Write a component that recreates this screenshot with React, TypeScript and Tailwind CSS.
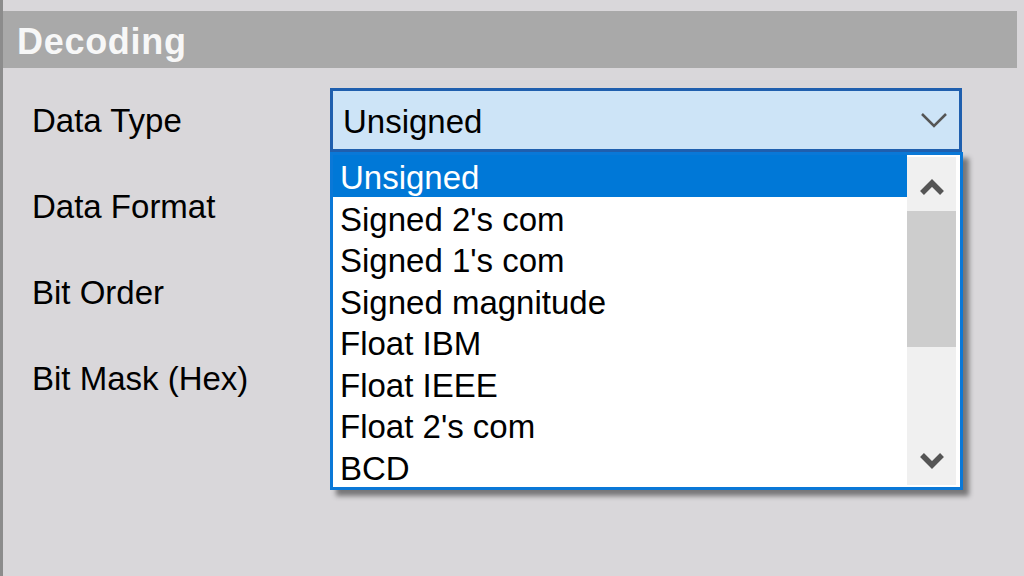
import React from "react";

const items = [
  "Unsigned",
  "Signed 2's com",
  "Signed 1's com",
  "Signed magnitude",
  "Float IBM",
  "Float IEEE",
  "Float 2's com",
  "BCD",
];

const labels = ["Data Type", "Data Format", "Bit Order", "Bit Mask (Hex)"];

export default function App() {
  return (
    <div
      className="w-[1024px] h-[576px] bg-[#d9d7da] border-l-[3px] border-[#8c8c8c] pt-[11px] pr-[7px] overflow-hidden"
      style={{ fontFamily: '"Liberation Sans", Arial, sans-serif' }}
    >
      <div className="h-[57px] bg-[#a9a9a9] flex items-center pl-[14px] pt-[4px]">
        <span className="text-[36px] font-bold text-[#f7f7f7] leading-none tracking-[0.7px]">
          Decoding
        </span>
      </div>
      <div className="flex mt-[20px]">
        <div className="w-[327px] pl-[29px] flex flex-col gap-[22px]">
          {labels.map((l) => (
            <div key={l} className="h-[64px] flex items-center text-[33px] text-black leading-none">
              {l}
            </div>
          ))}
        </div>
        <div className="relative w-[632px]">
          <div className="h-[64px] border-[3px] border-[#1f5fae] bg-[#cde4f7] flex items-center justify-between pl-[10px] pr-[11px]">
            <span className="text-[33px] text-black leading-none pt-[2px]">Unsigned</span>
            <svg width="28" height="18" viewBox="0 0 28 18">
              <polyline points="2,3 14,15 26,3" fill="none" stroke="#555" strokeWidth="2.5" />
            </svg>
          </div>
          <div className="absolute top-[64px] left-0 w-[633px] h-[338px] border-[3px] border-[#0a78d7] bg-white flex shadow-[6px_6px_5px_rgba(0,0,0,0.45)]">
            <div className="w-[574px] flex flex-col">
              {items.map((it, i) => (
                <div
                  key={it}
                  className={`h-[41.5px] flex items-center pl-[7px] pt-[4px] text-[33px] leading-none ${
                    i === 0 ? "bg-[#0078d7] text-white" : "text-black"
                  }`}
                >
                  {it}
                </div>
              ))}
            </div>
            <div className="w-[49px] my-[2px] flex flex-col bg-[#f0f0f0]">
              <div className="h-[54px] flex justify-center items-start pt-[19px]">
                <svg width="26" height="20" viewBox="0 0 26 20">
                  <polyline points="3,17 13,7 23,17" fill="none" stroke="#555" strokeWidth="5.5" />
                </svg>
              </div>
              <div className="h-[136px] bg-[#cdcdcd]" />
              <div className="flex-1" />
              <div className="h-[54px] flex justify-center items-start pt-[21px]">
                <svg width="26" height="20" viewBox="0 0 26 20">
                  <polyline points="3,3 13,13 23,3" fill="none" stroke="#555" strokeWidth="5.5" />
                </svg>
              </div>
            </div>
          </div>
        </div>
      </div>
    </div>
  );
}
